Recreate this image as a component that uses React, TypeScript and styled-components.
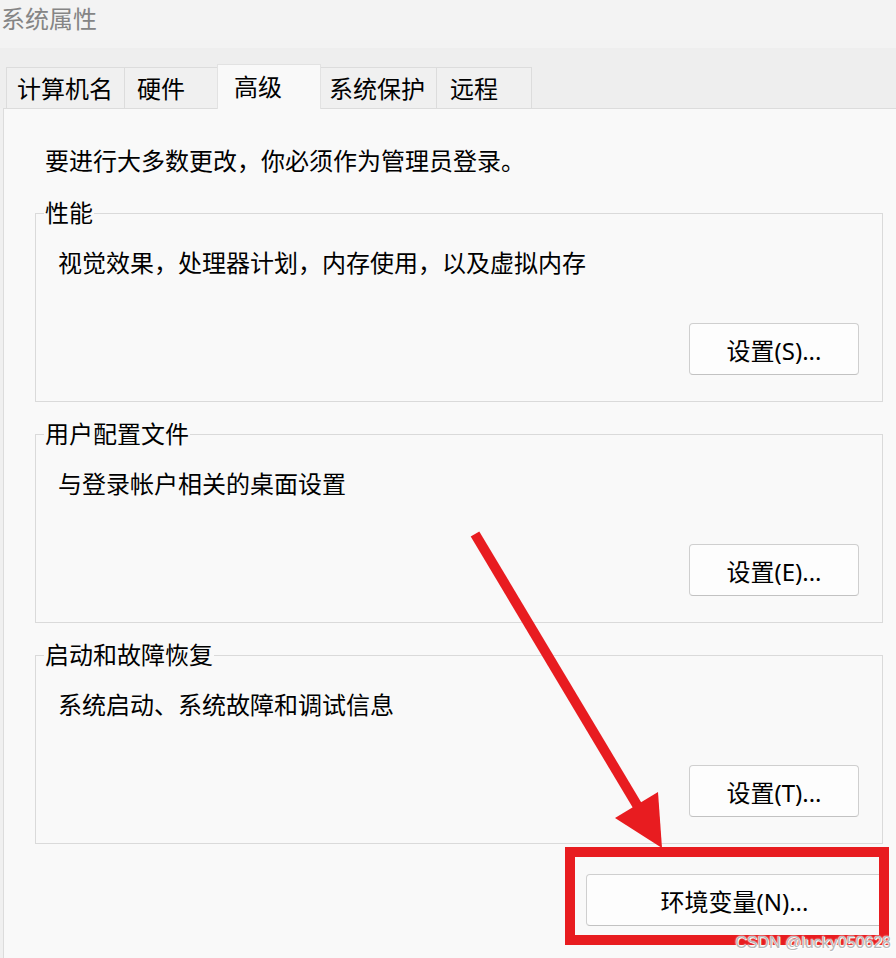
import React from 'react';
import styled, { createGlobalStyle } from 'styled-components';

const GlobalStyle = createGlobalStyle`
  html, body {
    margin: 0;
    padding: 0;
    background: #f9f9f9;
  }
  body {
    font-family: "Noto Sans", "Noto Sans CJK SC", sans-serif;
    color: #000;
  }
`;

const Window = styled.div`
  position: relative;
  width: 896px;
  height: 958px;
  overflow: hidden;
  display: flex;
  flex-direction: column;
  background: #f0f0f0;
`;

const TitleBar = styled.div`
  height: 48px;
  padding-left: 1px;
  background: #f3f3f3;
  color: #858585;
  font-size: 24px;
  line-height: 38px;
  flex-shrink: 0;
`;

const TabStrip = styled.div`
  height: 60px;
  display: flex;
  align-items: flex-end;
  padding-left: 7px;
  background: #eeeeee;
  flex-shrink: 0;
`;

const Tab = styled.div<{ $width: number; $active?: boolean; $pad: number }>`
  box-sizing: border-box;
  width: ${(p) => p.$width}px;
  height: ${(p) => (p.$active ? 45 : 41)}px;
  padding-left: ${(p) => p.$pad}px;
  border: 1px solid ${(p) => (p.$active ? '#e2e2e2' : '#dcdcdc')};
  border-bottom: none;
  margin-left: -1px;
  background: ${(p) => (p.$active ? '#f9f9f9' : '#f0f0f0')};
  font-size: 24px;
  line-height: ${(p) => (p.$active ? 44 : 42)}px;
  position: relative;
  z-index: ${(p) => (p.$active ? 2 : 1)};
  margin-bottom: ${(p) => (p.$active ? -1 : 0)}px;
  white-space: nowrap;
`;

const Panel = styled.div`
  flex: 1;
  margin-left: 3px;
  border-top: 1px solid #dcdcdc;
  border-left: 1px solid #dcdcdc;
  background: #f9f9f9;
  display: flex;
  flex-direction: column;
  padding: 37px 0 0 31px;
`;

const Intro = styled.div`
  font-size: 24px;
  line-height: 30px;
  padding-left: 10px;
  margin-bottom: 22px;
`;

const Column = styled.div`
  width: 848px;
  display: flex;
  flex-direction: column;
  gap: 17px;
`;

const Group = styled.fieldset`
  margin: 0;
  padding: 0 23px 26px 0;
  border: 1px solid #dadada;
  display: flex;
  flex-direction: column;
  min-width: 0;
`;

const Legend = styled.legend`
  margin-left: 8px;
  padding: 0 1px;
  font-size: 24px;
  line-height: 30px;
`;

const Description = styled.div`
  font-size: 24px;
  line-height: 30px;
  margin: 20px 0 0 22px;
`;

const ButtonRow = styled.div`
  display: flex;
  justify-content: flex-end;
  margin-top: ${(p: { $top: number }) => p.$top}px;
`;

const DialogButton = styled.button<{ $width: number }>`
  box-sizing: border-box;
  width: ${(p) => p.$width}px;
  height: 52px;
  border: 1px solid #cfcfcf;
  border-bottom-color: #c2c2c2;
  border-radius: 4px;
  background: #fdfdfd;
  font-family: "Noto Sans", "Noto Sans CJK SC", sans-serif;
  font-size: 24px;
  color: #000;
  padding: 0;
`;

const Overlay = styled.svg`
  position: absolute;
  left: 0;
  top: 0;
  pointer-events: none;
  z-index: 5;
`;

const Watermark = styled.div`
  position: absolute;
  right: 5px;
  bottom: 6px;
  z-index: 6;
  font-family: "Liberation Sans", Arial, sans-serif;
  font-size: 16px;
  line-height: 18px;
  color: #b8b8b8;
  text-shadow: 0 0 2px #fff, 0 0 1px #fff, 1px 1px 0 #fff;
`;

const tabs = [
  { label: '计算机名', width: 119, pad: 10 },
  { label: '硬件', width: 94, pad: 12 },
  { label: '高级', width: 104, pad: 16, active: true },
  { label: '系统保护', width: 117, pad: 8 },
  { label: '远程', width: 96, pad: 13 },
];

const groups = [
  { title: '性能', text: '视觉效果，处理器计划，内存使用，以及虚拟内存', button: '设置(S)...' },
  { title: '用户配置文件', text: '与登录帐户相关的桌面设置', button: '设置(E)...' },
  { title: '启动和故障恢复', text: '系统启动、系统故障和调试信息', button: '设置(T)...' },
];

const App: React.FC = () => {
  return (
    <Window>
      <GlobalStyle />
      <TitleBar>系统属性</TitleBar>
      <TabStrip>
        {tabs.map((t) => (
          <Tab key={t.label} $width={t.width} $pad={t.pad} $active={t.active}>
            {t.label}
          </Tab>
        ))}
      </TabStrip>
      <Panel>
        <Intro>要进行大多数更改，你必须作为管理员登录。</Intro>
        <Column>
          {groups.map((g) => (
            <Group key={g.title}>
              <Legend>{g.title}</Legend>
              <Description>{g.text}</Description>
              <ButtonRow $top={45}>
                <DialogButton $width={170}>{g.button}</DialogButton>
              </ButtonRow>
            </Group>
          ))}
          <ButtonRow $top={13}>
            <DialogButton $width={297}>环境变量(N)...</DialogButton>
          </ButtonRow>
        </Column>
      </Panel>

      <Overlay width="896" height="958" viewBox="0 0 896 958">
        <line x1="475" y1="534" x2="640" y2="810" stroke="#e81c20" strokeWidth="10" />
        <polygon points="615,818 658,792 662,848" fill="#e81c20" />
        <rect x="570" y="852" width="314" height="88" fill="none" stroke="#e81c20" strokeWidth="10" />
      </Overlay>
      <Watermark>CSDN @lucky050628</Watermark>
    </Window>
  );
};

export default App;
